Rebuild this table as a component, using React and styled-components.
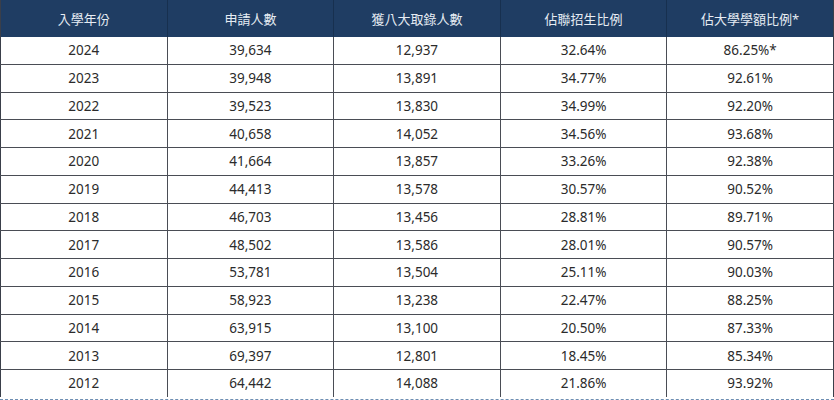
import React from 'react';
import styled, { createGlobalStyle } from 'styled-components';

const GlobalStyle = createGlobalStyle`
  html, body {
    margin: 0;
    padding: 0;
    background: #ffffff;
  }
`;

const Wrapper = styled.div`
  width: 834px;
  height: 400px;
  overflow: hidden;
  border-bottom: 1px dashed #6f8fb3;
  box-sizing: border-box;
  font-family: "Noto Sans", "Noto Sans CJK TC", sans-serif;
`;

const Table = styled.table`
  width: 834px;
  border-collapse: collapse;
  table-layout: fixed;
  border-left: 1px solid #3a3f4a;
  border-right: 1px solid #3a3f4a;
`;

const HeadCell = styled.th`
  background: #1f3d63;
  color: #e6ecf3;
  font-weight: 400;
  font-size: 13px;
  height: 37px;
  padding: 0;
  text-align: center;
  border-left: 1px solid #17304f;
  &:first-child {
    border-left: none;
  }
`;

const Row = styled.tr`
  border-top: ${(p) => (p.$first ? 'none' : '1px solid #4a4d55')};
`;

const Cell = styled.td`
  height: 26.75px;
  padding: 0;
  text-align: center;
  color: #2b2b2b;
  font-size: 13.5px;
  border-left: 1px solid #4a4d55;
  &:first-child {
    border-left: none;
  }
`;

const headers = ['入學年份', '申請人數', '獲八大取錄人數', '佔聯招生比例', '佔大學學額比例*'];

const rows = [
  ['2024', '39,634', '12,937', '32.64%', '86.25%*'],
  ['2023', '39,948', '13,891', '34.77%', '92.61%'],
  ['2022', '39,523', '13,830', '34.99%', '92.20%'],
  ['2021', '40,658', '14,052', '34.56%', '93.68%'],
  ['2020', '41,664', '13,857', '33.26%', '92.38%'],
  ['2019', '44,413', '13,578', '30.57%', '90.52%'],
  ['2018', '46,703', '13,456', '28.81%', '89.71%'],
  ['2017', '48,502', '13,586', '28.01%', '90.57%'],
  ['2016', '53,781', '13,504', '25.11%', '90.03%'],
  ['2015', '58,923', '13,238', '22.47%', '88.25%'],
  ['2014', '63,915', '13,100', '20.50%', '87.33%'],
  ['2013', '69,397', '12,801', '18.45%', '85.34%'],
  ['2012', '64,442', '14,088', '21.86%', '93.92%'],
];

export default function App() {
  return (
    <Wrapper>
      <GlobalStyle />
      <Table>
        <thead>
          <tr>
            {headers.map((h) => (
              <HeadCell key={h}>{h}</HeadCell>
            ))}
          </tr>
        </thead>
        <tbody>
          {rows.map((r, i) => (
            <Row key={r[0]} $first={i === 0}>
              {r.map((c, j) => (
                <Cell key={j}>{c}</Cell>
              ))}
            </Row>
          ))}
        </tbody>
      </Table>
    </Wrapper>
  );
}
